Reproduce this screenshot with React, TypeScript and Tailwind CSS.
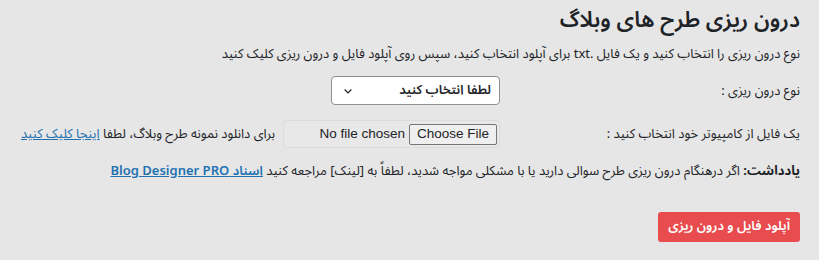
export default function App() {
  return (
    <div
      dir="rtl"
      className="min-h-[260px] w-full bg-[#e6e6e6] pr-[19px] pl-5 pt-[3px] text-[13px] text-[#1d2327]"
      style={{ fontFamily: '"Noto Sans Arabic", "DejaVu Sans", "Noto Sans", sans-serif' }}
    >
      <h1 className="text-[22px] font-semibold leading-[34px]">درون ریزی طرح های وبلاگ</h1>

      <p className="mt-[7px] whitespace-nowrap leading-[20px]">
        نوع درون ریزی را انتخاب کنید و یک فایل .txt برای آپلود انتخاب کنید، سپس روی آپلود فایل و درون ریزی کلیک کنید
      </p>

      {/* Import type */}
      <div className="mt-[12px] grid grid-cols-[300px_1fr] items-center">
        <label className="leading-[20px]">نوع درون ریزی :</label>
        <div className="flex h-[29px] w-[169px] items-center justify-between rounded-[4px] border border-[#8c8f94] bg-white pr-[8px] pl-[10px]">
          <span className="font-semibold">لطفا انتخاب کنید</span>
          <svg width="12" height="12" viewBox="0 0 16 16" fill="none" stroke="#1d2327" strokeWidth="1.6">
            <path d="M3.5 6l4.5 4.5L12.5 6" />
          </svg>
        </div>
      </div>

      {/* File */}
      <div className="mt-[15px] grid grid-cols-[300px_1fr] items-center">
        <label className="leading-[20px]">یک فایل از کامپیوتر خود انتخاب کنید :</label>
        <div className="flex items-center gap-[8px] whitespace-nowrap">
          <div
            dir="ltr"
            className="flex h-[28px] w-[217px] shrink-0 items-center justify-end gap-[4px] rounded-[4px] border border-[#dcdcde] bg-[#e8e8e8] pr-[2px]"
            style={{ fontFamily: '"Liberation Sans", Arial, sans-serif' }}
          >
            <span className="text-[13.5px]">No file chosen</span>
            <span className="flex h-[21px] items-center rounded-[2px] border border-[#767676] bg-[#efefef] px-[7px] text-[13.5px]">
              Choose File
            </span>
          </div>
          <span className="leading-[20px]">
            برای دانلود نمونه طرح وبلاگ، لطفا{" "}
            <a href="#" className="text-[#2271b1] underline">اینجا کلیک کنید</a>
          </span>
        </div>
      </div>

      {/* Note */}
      <p className="mt-[13px] whitespace-nowrap leading-[20px]">
        <b>یادداشت:</b> اگر درهنگام درون ریزی طرح سوالی دارید یا با مشکلی مواجه شدید، لطفاً به [لینک] مراجعه کنید{" "}
        <a href="#" className="font-semibold text-[#2271b1] underline">اسناد Blog Designer PRO</a>
      </p>

      <button className="mt-[31px] h-[30px] rounded-[3px] bg-[#e84c4e] px-[10px] font-semibold text-white">
        آپلود فایل و درون ریزی
      </button>
    </div>
  );
}
